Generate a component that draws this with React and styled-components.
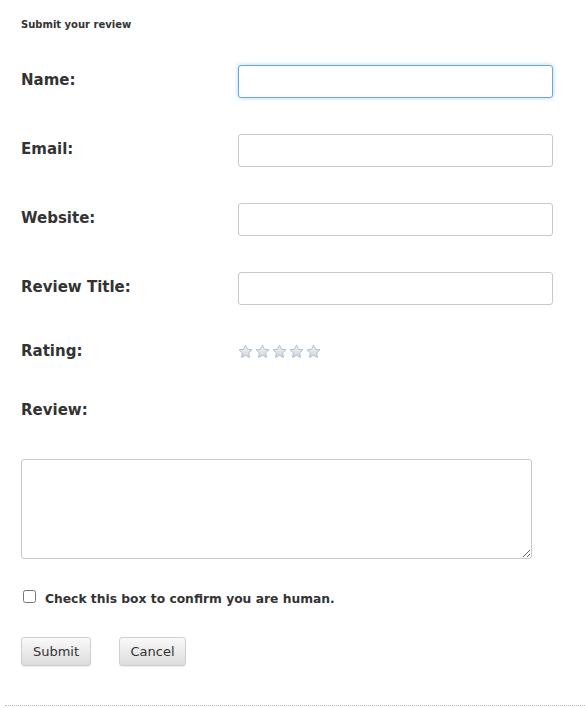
import React from "react";
import styled, { createGlobalStyle } from "styled-components";

const Global = createGlobalStyle`
  html, body { margin: 0; padding: 0; background: #fff; }
  body { font-family: "DejaVu Sans", Verdana, sans-serif; color: #333; }
`;

const Page = styled.div`
  width: 585px;
  height: 708px;
  box-sizing: border-box;
  padding: 17px 0 0 21px;
  display: flex;
  flex-direction: column;
`;

const Heading = styled.h3`
  margin: 0 0 32px;
  font-size: 10px;
  line-height: 16px;
  font-weight: bold;
  color: #333;
`;

const Row = styled.div`
  display: grid;
  grid-template-columns: 217px 315px;
  align-items: center;
  height: ${(p) => p.$h || 33}px;
  margin-bottom: ${(p) => p.$mb ?? 36}px;
`;

const Label = styled.label`
  font-size: 15px;
  font-weight: bold;
  color: #333;
  line-height: 18px;
  padding-bottom: ${(p) => p.$lift ?? 4}px;
`;

const TextInput = styled.input`
  box-sizing: border-box;
  width: 315px;
  height: 33px;
  border: 1px solid ${(p) => (p.$focus ? "#66a9de" : "#c8c8c8")};
  border-radius: 3px;
  box-shadow: ${(p) =>
    p.$focus ? "0 0 4px rgba(102,169,222,0.55)" : "none"};
  outline: none;
  padding: 0 8px;
  font-family: inherit;
  font-size: 13px;
  background: #fff;
`;

const Stars = styled.div`
  display: flex;
  gap: 2px;
`;

const TextArea = styled.textarea`
  box-sizing: border-box;
  width: 511px;
  height: 100px;
  border: 1px solid #c8c8c8;
  border-radius: 3px;
  outline: none;
  font-family: inherit;
  font-size: 13px;
  padding: 6px;
  margin: 0 0 28px;
  resize: both;
  display: block;
`;

const CheckRow = styled.label`
  display: flex;
  align-items: center;
  height: 20px;
  font-size: 12.3px;
  font-weight: bold;
  color: #333;
  margin-bottom: 30px;
`;

const CheckText = styled.span`
  padding-top: 4px;
`;

const Check = styled.input`
  width: 13px;
  height: 13px;
  margin: 0 9px 2px 2px;
`;

const Buttons = styled.div`
  display: flex;
  gap: 28px;
`;

const Button = styled.button`
  box-sizing: border-box;
  width: ${(p) => p.$w}px;
  height: 29px;
  padding: 0;
  font-family: inherit;
  font-size: 13px;
  color: #333;
  border: 1px solid #cfcfcf;
  border-radius: 3px;
  background: linear-gradient(#fafafa, #dcdcdc);
  box-shadow: 0 1px 1px rgba(0, 0, 0, 0.08);
  cursor: pointer;
`;

const Divider = styled.div`
  margin: auto 0 2px -16px;
  border-top: 1px dotted #bbb;
`;

function Star() {
  return (
    <svg width="15" height="15" viewBox="0 0 24 24">
      <defs>
        <linearGradient id="sg" x1="0" y1="0" x2="0" y2="1">
          <stop offset="0" stopColor="#f4f6f9" />
          <stop offset="1" stopColor="#cdd5df" />
        </linearGradient>
      </defs>
      <path
        d="M12 1.8l3.1 6.6 7.2.9-5.3 5 1.4 7.2L12 18l-6.4 3.5 1.4-7.2-5.3-5 7.2-.9z"
        fill="url(#sg)"
        stroke="#a9b3bf"
        strokeWidth="1.3"
        strokeLinejoin="round"
      />
    </svg>
  );
}

export default function App() {
  return (
    <Page>
      <Global />
      <Heading>Submit your review</Heading>
      <Row>
        <Label>Name:</Label>
        <TextInput $focus />
      </Row>
      <Row>
        <Label>Email:</Label>
        <TextInput />
      </Row>
      <Row>
        <Label>Website:</Label>
        <TextInput />
      </Row>
      <Row $mb={34}>
        <Label>Review Title:</Label>
        <TextInput />
      </Row>
      <Row $h={24} $mb={35}>
        <Label $lift={0}>Rating:</Label>
        <Stars>
          {[0, 1, 2, 3, 4].map((i) => (
            <Star key={i} />
          ))}
        </Stars>
      </Row>
      <Row $h={24} $mb={37}>
        <Label $lift={0}>Review:</Label>
      </Row>
      <TextArea />
      <CheckRow>
        <Check type="checkbox" />
        <CheckText>Check this box to confirm you are human.</CheckText>
      </CheckRow>
      <Buttons>
        <Button $w={70}>Submit</Button>
        <Button $w={67}>Cancel</Button>
      </Buttons>
      <Divider />
    </Page>
  );
}
